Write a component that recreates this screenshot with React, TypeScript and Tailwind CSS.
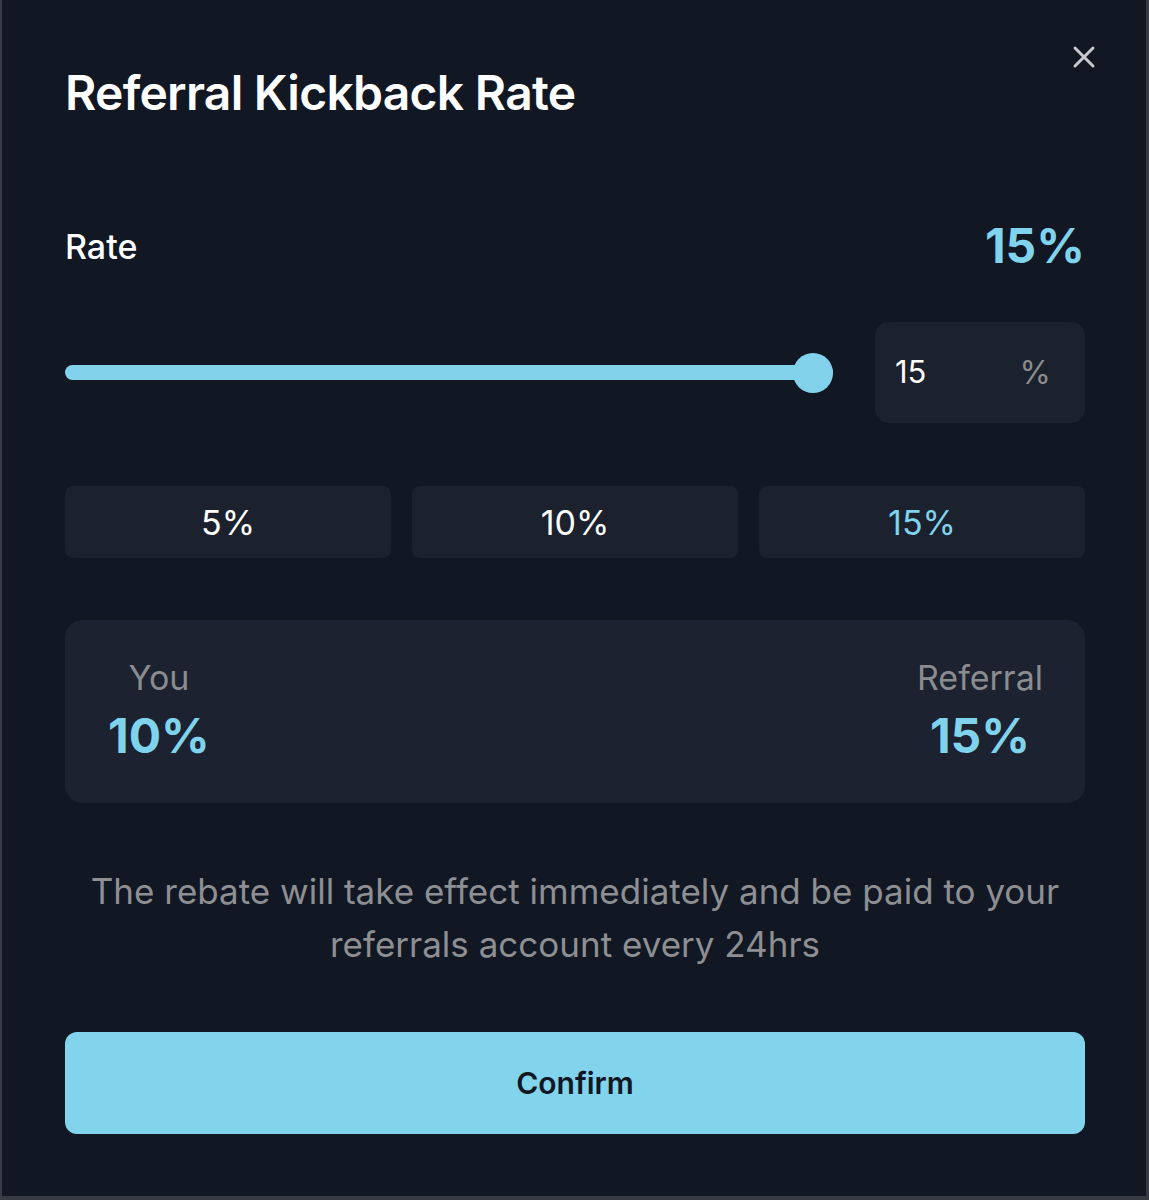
import { X } from "lucide-react";

const presets = [5, 10, 15];

export default function App() {
  const rate = 15;
  const pct = (rate / 15) * 100;

  return (
    <div className="w-[1149px] h-[1200px] bg-[#111723] border-l-[2px] border-r-[3px] border-b-[4px] border-[#363b44] font-['Inter',sans-serif] text-white relative">
      <button className="absolute right-[44px] top-[39px] text-[#c9cacc]">
        <X className="w-[36px] h-[36px]" strokeWidth={2} />
      </button>

      <div className="pl-[63px] pr-[61px] pt-[64px]">
        <h1 className="text-[48px] leading-[58px] font-semibold tracking-[-0.015em]">Referral Kickback Rate</h1>

        <div className="mt-[96px] flex items-center justify-between h-[56px]">
          <span className="text-[34px] font-medium">Rate</span>
          <span className="text-[48px] font-bold text-[#80d3ec]">{rate}%</span>
        </div>

        <div className="mt-[48px] flex items-center gap-[42px]">
          <div className="relative flex-1 h-[40px] flex items-center">
            <div className="h-[15px] w-full rounded-full bg-[#2a3040]">
              <div className="h-full rounded-full bg-[#82d2ec]" style={{ width: `${pct}%` }} />
            </div>
            <div className="absolute right-0 w-[40px] h-[40px] rounded-full bg-[#82d2ec]" />
          </div>
          <div className="w-[210px] h-[101px] rounded-[14px] bg-[#1b212d] flex items-center justify-between pl-[20px] pr-[34px]">
            <span className="text-[31px]">{rate}</span>
            <span className="text-[32px] text-[#8a8c90]">%</span>
          </div>
        </div>

        <div className="mt-[63px] grid grid-cols-3 gap-[21px]">
          {presets.map((p) => (
            <button
              key={p}
              className={`h-[72px] rounded-[8px] bg-[#1b212d] text-[34px] ${p === rate ? "text-[#80d3ec]" : "text-white"}`}
            >
              {p}%
            </button>
          ))}
        </div>

        <div className="mt-[62px] h-[183px] rounded-[18px] bg-[#1c2230] flex items-center justify-between pl-[43px] pr-[42px]">
          <div className="flex flex-col items-center">
            <span className="text-[34px] text-[#8b8c8f] leading-[40px]">You</span>
            <span className="text-[48px] font-bold text-[#80d3ec] leading-[60px] mt-[8px]">10%</span>
          </div>
          <div className="flex flex-col items-center">
            <span className="text-[34px] text-[#8b8c8f] leading-[40px]">Referral</span>
            <span className="text-[48px] font-bold text-[#80d3ec] leading-[60px] mt-[8px]">15%</span>
          </div>
        </div>

        <p className="mt-[62px] text-center text-[35px] leading-[53px] text-[#8e8f92]">
          The rebate will take effect immediately and be paid to your referrals account every 24hrs
        </p>

        <button className="mt-[61px] w-full h-[102px] rounded-[12px] bg-[#82d3ec] text-[#111723] text-[30px] font-semibold">
          Confirm
        </button>
      </div>
    </div>
  );
}
